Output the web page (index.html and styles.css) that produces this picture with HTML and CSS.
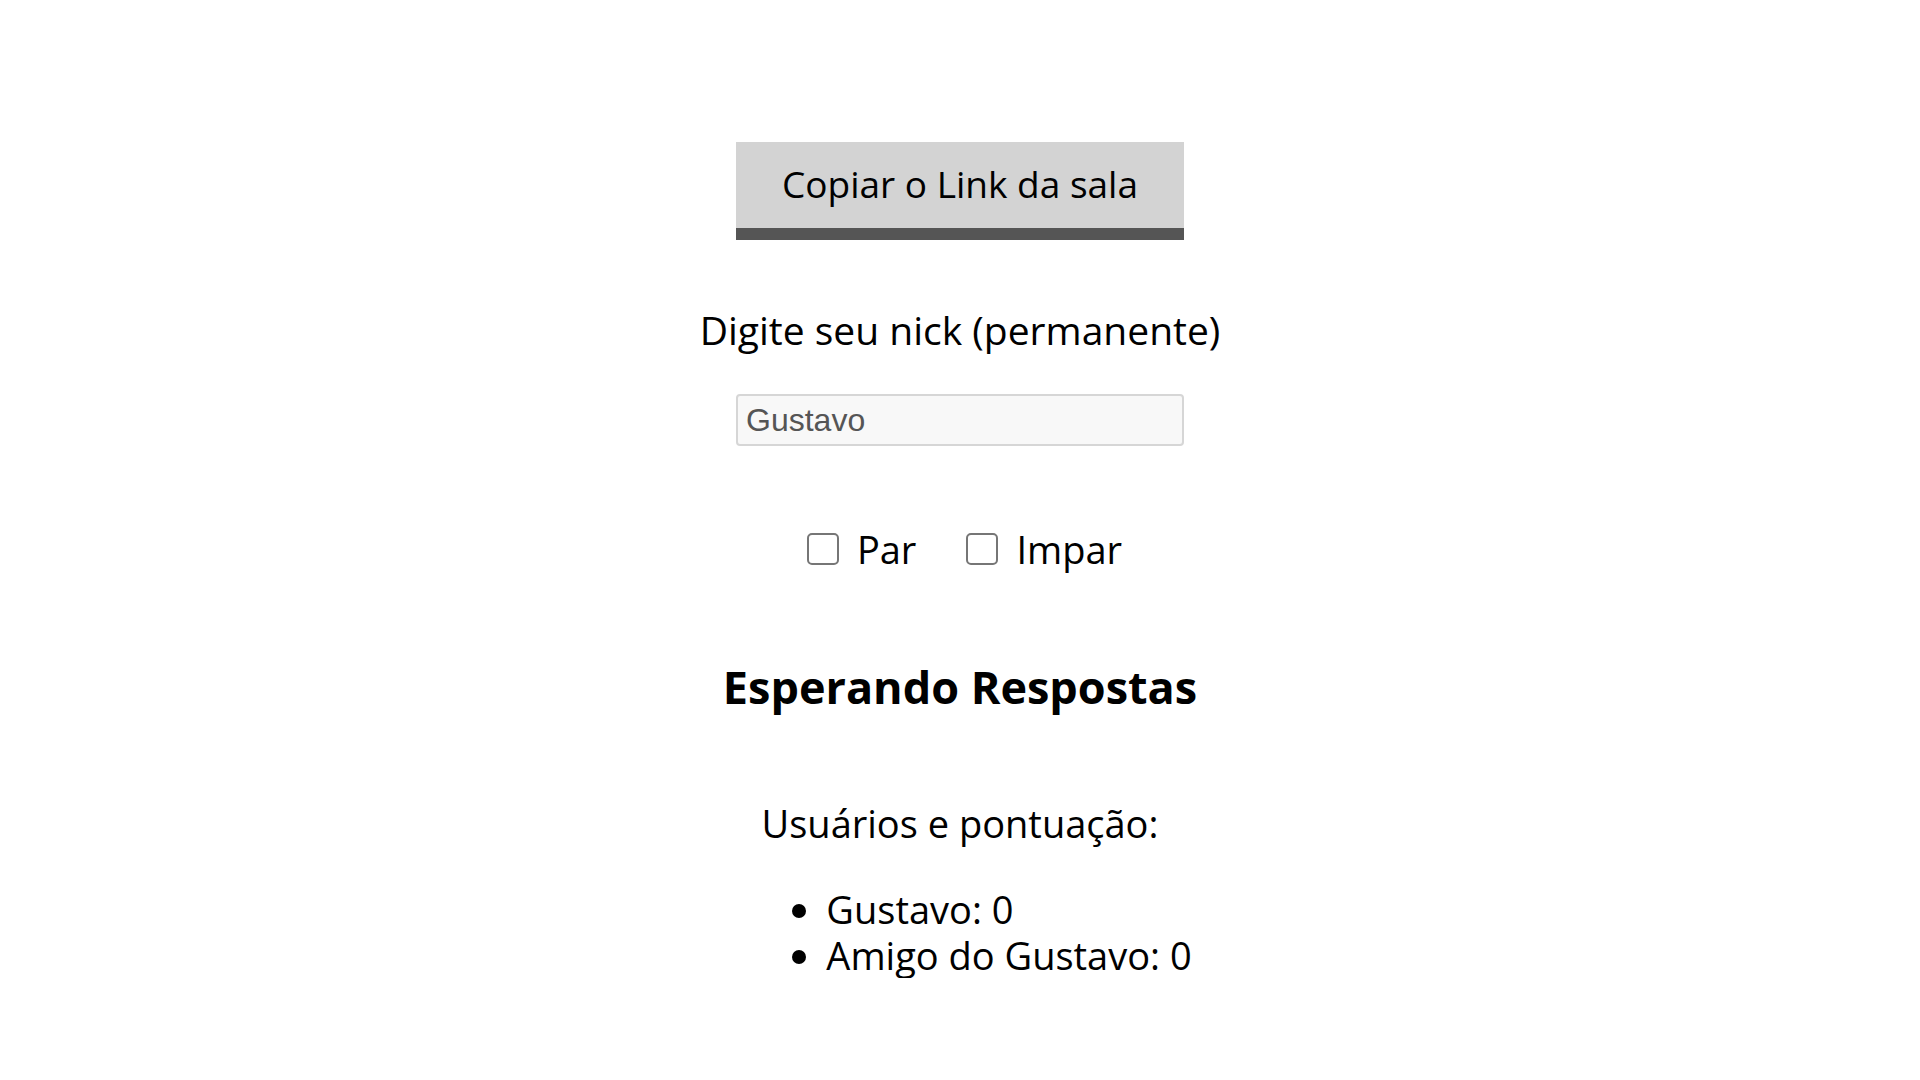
FILE: index.html
```html
<!DOCTYPE html>
<html lang="pt-BR">
<head>
<meta charset="utf-8">
<title>Par ou Impar</title>
<link rel="stylesheet" href="styles.css">
</head>
<body>
<main class="page">
  <button class="copy-btn" type="button">Copiar o Link da sala</button>
  <p class="nick-label">Digite seu nick (permanente)</p>
  <input class="nick-input" type="text" value="Gustavo">
  <div class="choices">
    <label class="choice choice-par"><input class="check" type="checkbox"><span>Par</span></label>
    <label class="choice choice-impar"><input class="check" type="checkbox"><span>Impar</span></label>
  </div>
  <h2 class="status">Esperando Respostas</h2>
  <p class="users-title">Usuários e pontuação:</p>
  <ul class="users">
    <li>Gustavo: 0</li>
    <li>Amigo do Gustavo: 0</li>
  </ul>
</main>
</body>
</html>
```

FILE: styles.css
```css
html, body {
  margin: 0;
  padding: 0;
  background: #ffffff;
}

body {
  font-family: "Open Sans", "Noto Sans", sans-serif;
  color: #000000;
}

.page {
  display: flex;
  flex-direction: column;
  align-items: center;
}

.copy-btn {
  margin-top: 142px;
  width: 448px;
  height: 98px;
  box-sizing: border-box;
  padding: 0 0 3px;
  background: #d3d3d3;
  border: none;
  border-bottom: 12px solid #555555;
  border-radius: 0;
  font-family: "Open Sans", "Noto Sans", sans-serif;
  font-size: 37px;
  line-height: 83px;
  color: #000000;
  cursor: pointer;
}

.nick-label {
  margin: 64px 0 0;
  font-size: 39px;
  line-height: 52px;
}

.nick-input {
  margin-top: 38px;
  width: 448px;
  height: 52px;
  box-sizing: border-box;
  padding: 0 8px;
  border: 2px solid #d6d6d6;
  border-radius: 4px;
  background: #f8f8f8;
  font-family: "Liberation Sans", Arial, sans-serif;
  font-size: 32px;
  color: #555555;
  outline: none;
}

.choices {
  margin-top: 81px;
  display: flex;
  justify-content: center;
  align-items: flex-start;
  padding-left: 9px;
  gap: 50px;
  font-size: 38px;
  line-height: 44px;
}

.choice {
  display: flex;
  align-items: flex-start;
}

.choice-par {
  gap: 18px;
}

.choice-impar {
  gap: 18px;
}

.check {
  appearance: none;
  -webkit-appearance: none;
  margin: 6px 0 0;
  width: 32px;
  height: 32px;
  box-sizing: border-box;
  border: 2.5px solid #767676;
  border-radius: 5px;
  background: #ffffff;
}

.status {
  margin: 86px 0 0;
  font-size: 45px;
  font-weight: 700;
  line-height: 60px;
}

.users-title {
  margin: 80px 0 0;
  font-size: 38px;
  line-height: 52px;
}

.users {
  margin: 37px 0 0;
  padding-left: 98px;
  align-self: center;
  font-size: 38px;
  line-height: 46px;
  list-style: disc;
}
```
